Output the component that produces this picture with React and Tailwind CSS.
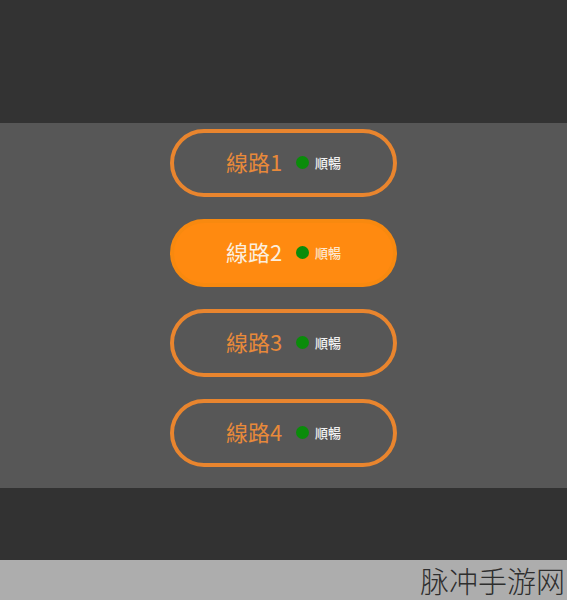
import React from 'react';

const lines = [
  { name: '線路1', active: false },
  { name: '線路2', active: true },
  { name: '線路3', active: false },
  { name: '線路4', active: false },
];

const font = { fontFamily: '"Noto Sans CJK TC", "Noto Sans", sans-serif' };

const LineButton = ({ name, active }) => (
  <button
    className={`w-[227px] h-[68px] pb-[5px] rounded-full flex items-center justify-center border-[4px] ${
      active ? 'bg-[#ff8a10] border-[#f8890f]' : 'bg-transparent border-[#e9852e]'
    }`}
  >
    <span className={`text-[22px] leading-none ${active ? 'text-[#fbeedd]' : 'text-[#e8893a]'}`}>{name}</span>
    <span className="ml-[14px] mt-[4px] w-[13px] h-[13px] rounded-full bg-[#0a8c0a]" />
    <span className={`ml-[6px] mt-[4px] text-[13px] leading-none font-medium ${active ? 'text-[#fde8cf]' : 'text-[#f2f2f2]'}`}>
      順暢
    </span>
  </button>
);

export default function App() {
  return (
    <div className="w-[567px] h-[600px] flex flex-col overflow-hidden" style={font}>
      <div className="h-[123px] bg-[#333333]" />
      <div className="h-[365px] bg-[#575757] flex flex-col items-center pt-[6px] gap-[22px]">
        {lines.map((l) => (
          <LineButton key={l.name} {...l} />
        ))}
      </div>
      <div className="h-[72px] bg-[#323232]" />
      <div className="h-[40px] bg-[#adadad] flex items-center justify-end pr-[2px]">
        <span className="text-[29px] leading-none text-[#2e2e2e] font-light whitespace-nowrap">脉冲手游网</span>
      </div>
    </div>
  );
}
